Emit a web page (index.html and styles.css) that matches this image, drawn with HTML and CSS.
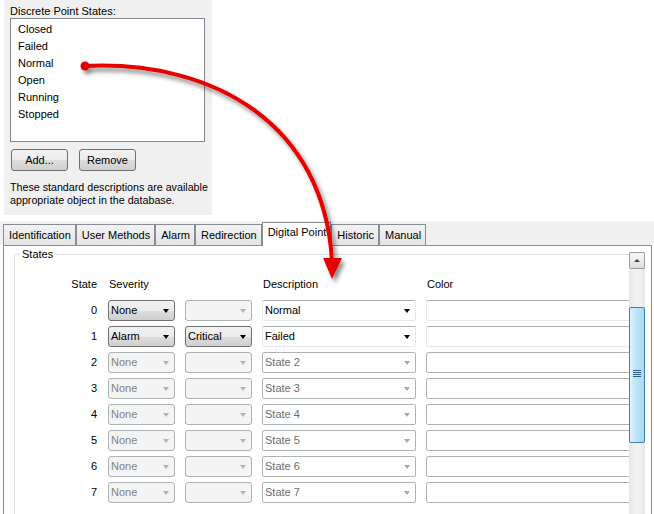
FILE: index.html
```html
<!DOCTYPE html>
<html lang="en">
<head>
    <meta charset="UTF-8">
    <title>Digital Point States</title>
    <link rel="stylesheet" href="styles.css">
</head>
<body>
<div class="page">
    <div class="states-panel">
        <div class="caption">Discrete Point States:</div>
        <ul class="listbox">
            <li>Closed</li>
            <li>Failed</li>
            <li>Normal</li>
            <li>Open</li>
            <li>Running</li>
            <li>Stopped</li>
        </ul>
        <div class="buttons">
            <button class="btn">Add...</button>
            <button class="btn">Remove</button>
        </div>
        <p class="note">These standard descriptions are available<br>appropriate object in the database.</p>
    </div>

    <div class="tabs">
        <div class="tab">Identification</div>
        <div class="tab">User Methods</div>
        <div class="tab">Alarm</div>
        <div class="tab">Redirection</div>
        <div class="tab active">Digital Point</div>
        <div class="tab">Historic</div>
        <div class="tab">Manual</div>
    </div>

    <div class="tab-panel">
        <div class="viewport">
            <fieldset class="group">
                <legend>States</legend>
                <div class="grid">
                    <div class="hd num">State</div>
                    <div class="hd">Severity</div>
                    <div></div>
                    <div class="hd">Description</div>
                    <div class="hd">Color</div>

                    <div class="num">0</div>
                    <div class="combo">None</div>
                    <div class="combo off"></div>
                    <div class="combo edit">Normal</div>
                    <div class="swatch"></div>

                    <div class="num">1</div>
                    <div class="combo">Alarm</div>
                    <div class="combo">Critical</div>
                    <div class="combo edit">Failed</div>
                    <div class="swatch"></div>

                    <div class="num">2</div>
                    <div class="combo off">None</div>
                    <div class="combo off"></div>
                    <div class="combo edit dim">State 2</div>
                    <div class="swatch dim"></div>

                    <div class="num">3</div>
                    <div class="combo off">None</div>
                    <div class="combo off"></div>
                    <div class="combo edit dim">State 3</div>
                    <div class="swatch dim"></div>

                    <div class="num">4</div>
                    <div class="combo off">None</div>
                    <div class="combo off"></div>
                    <div class="combo edit dim">State 4</div>
                    <div class="swatch dim"></div>

                    <div class="num">5</div>
                    <div class="combo off">None</div>
                    <div class="combo off"></div>
                    <div class="combo edit dim">State 5</div>
                    <div class="swatch dim"></div>

                    <div class="num">6</div>
                    <div class="combo off">None</div>
                    <div class="combo off"></div>
                    <div class="combo edit dim">State 6</div>
                    <div class="swatch dim"></div>

                    <div class="num">7</div>
                    <div class="combo off">None</div>
                    <div class="combo off"></div>
                    <div class="combo edit dim">State 7</div>
                    <div class="swatch dim"></div>
                </div>
            </fieldset>
        </div>
        <div class="scrollbar">
            <div class="sb-up"></div>
            <div class="sb-thumb"><span class="grip"></span></div>
        </div>
    </div>

    <!-- callout arrow drawn over the screenshot -->
    <svg class="arrow" width="654" height="514" viewBox="0 0 654 514">
        <defs>
            <filter id="shadow" x="-20%" y="-20%" width="140%" height="140%">
                <feDropShadow dx="3" dy="4" stdDeviation="2" flood-color="#000" flood-opacity="0.45"/>
            </filter>
        </defs>
        <g filter="url(#shadow)">
            <path d="M85,66 C215,60 325,125 332,262" fill="none" stroke="#e60000" stroke-width="4" stroke-linecap="round"/>
            <circle cx="85" cy="66" r="4.5" fill="#e60000"/>
            <polygon points="323,258 342,258 332,279" fill="#e60000"/>
        </g>
    </svg>
</div>
</body>
</html>
```

FILE: styles.css
```css
html, body {
    margin: 0;
    overflow: hidden;
}

body {
    font-family: "Liberation Sans", Arial, sans-serif;
    font-size: 11px;
    color: #000;
    background: #fff;
}

.page {
    position: relative;
    width: 654px;
    height: 514px;
    overflow: hidden;
}

/* top dialog fragment */
.states-panel {
    margin-left: 4px;
    width: 208px;
    height: 215px;
    padding: 5px 0 0 6px;
    box-sizing: border-box;
    background: #f0f0f0;
    overflow: hidden;
}

.caption {
    line-height: 13px;
}

.listbox {
    list-style: none;
    margin: 0;
    padding: 2px 0 0 7px;
    width: 195px;
    height: 124px;
    box-sizing: border-box;
    border: 1px solid #828790;
    background: #fff;
}

.listbox li {
    line-height: 17px;
}

.buttons {
    display: flex;
    gap: 11px;
    margin: 7px 0 0 1px;
}

.btn {
    width: 57px;
    height: 22px;
    padding: 0;
    font: inherit;
    color: #000;
    border: 1px solid #707070;
    border-radius: 3px;
    background: linear-gradient(#f2f2f2 0%, #ebebeb 50%, #dddddd 51%, #cfcfcf 100%);
}

.note {
    margin: 10px 0 0 0;
    line-height: 13px;
    font-size: 10.7px;
    white-space: nowrap;
}

/* tab strip */
.tabs {
    display: flex;
    align-items: flex-end;
    height: 24px;
    margin-top: 6px;
    padding-left: 3px;
    background: #f0f0f0;
}

.tab {
    height: 20px;
    line-height: 20px;
    padding: 0 4px 0 5px;
    border: 1px solid #898c95;
    border-bottom: 0;
    background: linear-gradient(#f3f3f3, #e4e4e4);
    white-space: nowrap;
}

.tab.active {
    position: relative;
    height: 23px;
    line-height: 19px;
    margin-bottom: -1px;
    background: #fff;
}

.tab-panel {
    display: flex;
    height: 300px;
    margin: 0 2px 0 3px;
    border: 1px solid #898c95;
    background: #fff;
}

.viewport {
    flex: 1;
    overflow: hidden;
}

.group {
    width: 700px;
    height: 320px;
    margin: 2px 0 0 10px;
    padding: 13px 0 0 0;
    box-sizing: border-box;
    border: 1px solid #d5dfe5;
    border-radius: 3px;
}

.group legend {
    margin-left: 5px;
    padding: 0 2px;
    line-height: 13px;
}

.grid {
    display: grid;
    grid-template-columns: 83px 67px 67px 154px 1fr;
    grid-auto-rows: 21px;
    column-gap: 10px;
    row-gap: 5px;
}

.hd {
    line-height: 21px;
    padding-left: 1px;
}

.num {
    line-height: 21px;
    text-align: right;
    padding-right: 1px;
}

/* drop-down boxes */
.combo {
    position: relative;
    box-sizing: border-box;
    height: 21px;
    line-height: 19px;
    padding-left: 2px;
    border: 1px solid #707070;
    border-radius: 3px;
    background: linear-gradient(#f2f2f2 0%, #ebebeb 50%, #dddddd 51%, #cfcfcf 100%);
    white-space: nowrap;
}

.combo::after {
    content: "";
    position: absolute;
    right: 5px;
    top: 8px;
    border-style: solid;
    border-width: 4px 3.5px 0 3.5px;
    border-color: #000 transparent transparent transparent;
}

.combo.off {
    color: #838383;
    border-color: #adb2b5;
    background: #f4f4f4;
}

.combo.off::after {
    border-top-color: #b4b4b4;
}

.combo.edit {
    border-radius: 2px;
    border-color: #e3e9ef;
    border-top-color: #abadb3;
    background: #fff;
}

.combo.edit.dim {
    color: #6d6d6d;
    border-color: #adb2b5;
}

.combo.edit.dim::after {
    border-top-color: #a8a8a8;
}

.swatch {
    box-sizing: border-box;
    height: 21px;
    border: 1px solid #e3e9ef;
    border-top-color: #abadb3;
    border-radius: 2px;
    background: #fff;
}

.swatch.dim {
    border-color: #adb2b5;
}

/* vertical scrollbar */
.scrollbar {
    display: flex;
    flex-direction: column;
    width: 16px;
    margin: 6px 6px 0 0;
    background: linear-gradient(to right, #e6e6e6, #f0f0f0 30%, #f0f0f0 70%, #e6e6e6);
}

.sb-up {
    position: relative;
    height: 17px;
    box-sizing: border-box;
    border: 1px solid #9c9c9c;
    border-radius: 2px;
    background: linear-gradient(#f8f8f8, #dedede);
}

.sb-up::after {
    content: "";
    position: absolute;
    left: 4px;
    top: 6px;
    border-style: solid;
    border-width: 0 3px 3px 3px;
    border-color: transparent transparent #404040 transparent;
}

.sb-thumb {
    position: relative;
    height: 136px;
    margin-top: 38px;
    box-sizing: border-box;
    border: 1px solid #3c7fb1;
    border-radius: 2px;
    background: linear-gradient(to right, #e3f4fc, #bfe5f8 40%, #a9d9f2);
}

.grip {
    position: absolute;
    left: 3px;
    top: 62px;
    width: 8px;
    height: 8px;
    background: repeating-linear-gradient(#2c628b 0, #2c628b 1px, transparent 1px, transparent 2px);
}

.arrow {
    position: absolute;
    left: 0;
    top: 0;
    pointer-events: none;
}
```
